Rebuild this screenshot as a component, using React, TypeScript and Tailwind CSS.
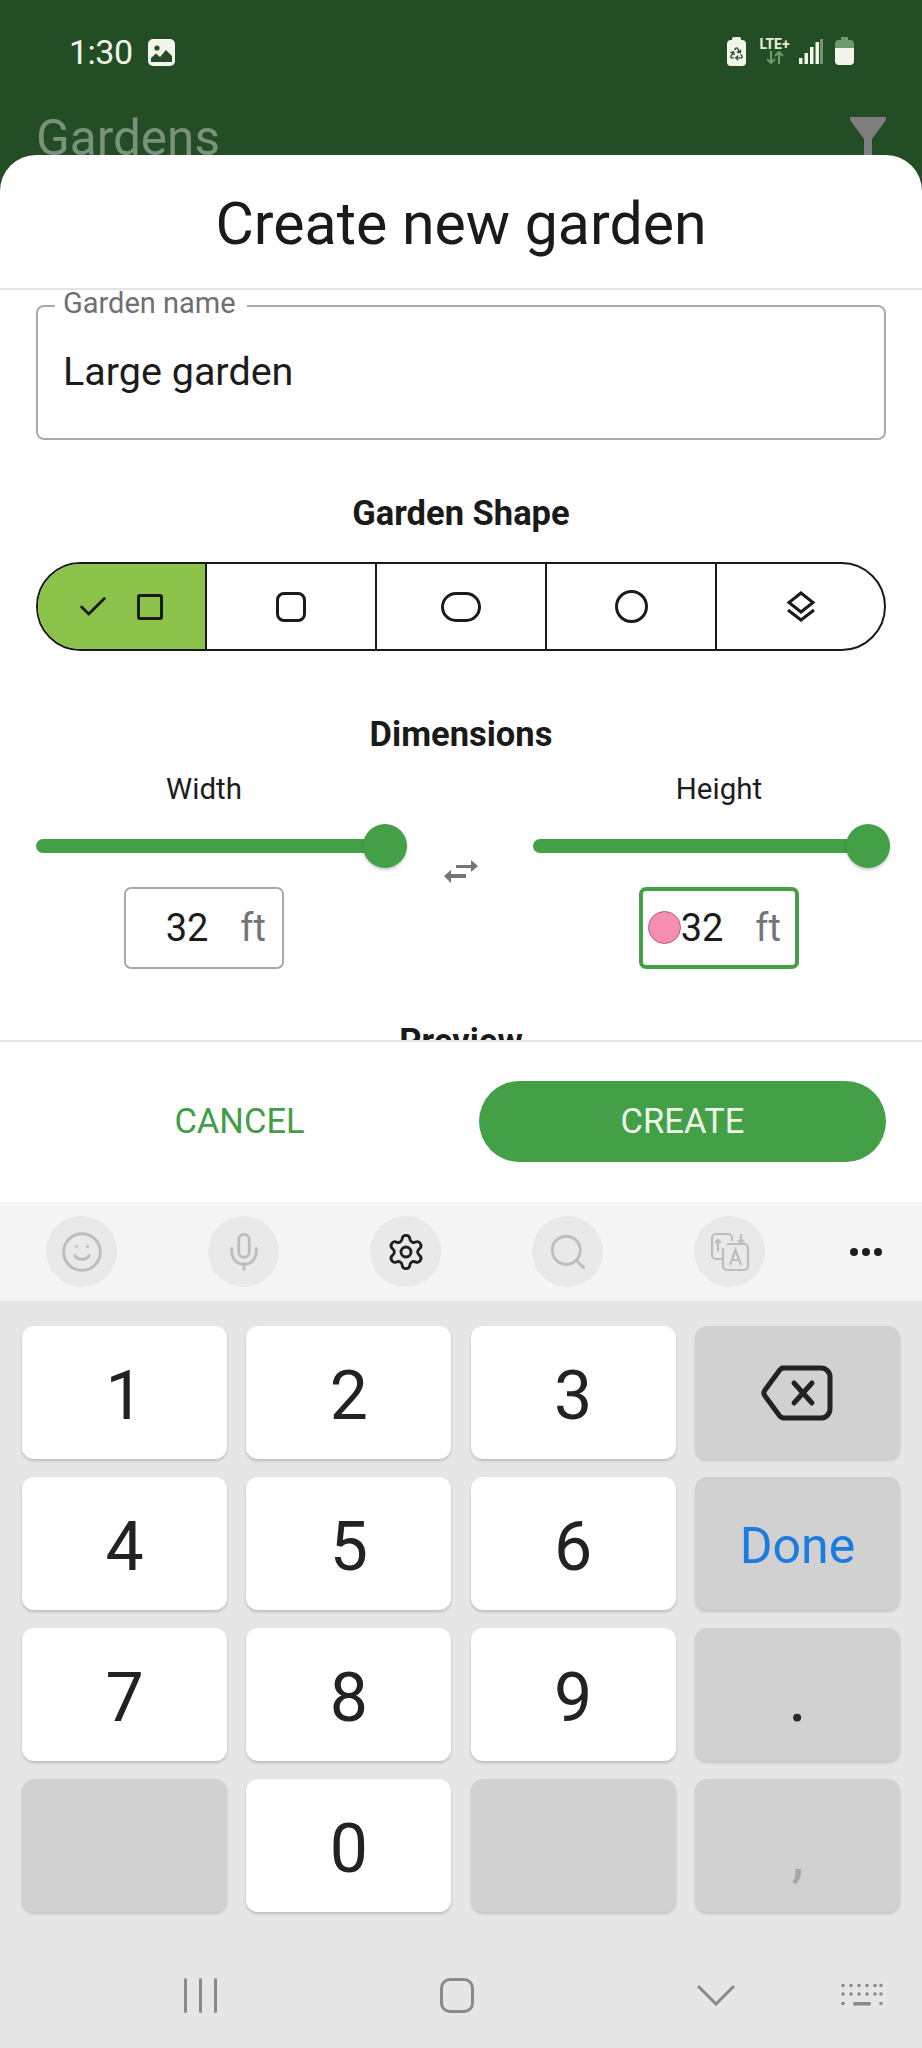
import { Check, Recycle, Settings, Smile, Mic, Search } from "lucide-react";

const FONT = "font-['Roboto','Liberation_Sans',sans-serif]";

function StatusBar() {
  return (
    <div className="flex items-start justify-between pt-[37px] pl-[69px] pr-[68px] h-[110px]">
      <div className="flex items-center gap-[15px]">
        <span className="text-[34px] leading-[30px] text-[#f3f5ea] tracking-[-0.5px]">1:30</span>
        <svg width="27" height="27" viewBox="0 0 27 27">
          <rect width="27" height="27" rx="5" fill="#f3f5ea" />
          <circle cx="9" cy="9" r="2.6" fill="#234e25" />
          <path d="M3 23V19L8 14.5L12 18L18 11L24 17V23Z" fill="#234e25" />
        </svg>
      </div>
      <div className="flex items-start">
        <div className="relative w-[19px] h-[26px] mt-[3px] rounded-[4px] bg-[#f3f5ea] flex items-center justify-center">
          <div className="absolute -top-[3px] left-[5px] w-[9px] h-[4px] rounded-t-[2px] bg-[#f3f5ea]" />
          <Recycle size={15} color="#234e25" strokeWidth={2.2} />
        </div>
        <div className="ml-[12px] w-[33px] flex flex-col items-center">
          <span className="text-[14px] leading-[14px] font-bold text-[#e8efdc]">LTE+</span>
          <svg width="18" height="13" viewBox="0 0 18 13" fill="none" stroke="#6f9a70" strokeWidth="2">
            <path d="M5 0V12M1 8L5 12L9 8" />
            <path d="M13 13V1M9 5L13 1L17 5" />
          </svg>
        </div>
        <svg className="ml-[8px] mt-[2px]" width="24" height="25" viewBox="0 0 24 25">
          <rect x="0" y="19" width="3.5" height="6" fill="#f3f5ea" />
          <rect x="5.5" y="14" width="3.5" height="11" fill="#f3f5ea" />
          <rect x="11" y="8" width="3.5" height="17" fill="#f3f5ea" />
          <rect x="16.5" y="3" width="3.5" height="22" fill="#f3f5ea" />
          <rect x="21" y="0" width="3" height="25" fill="#6f9a70" />
        </svg>
        <svg className="ml-[12px]" width="19" height="28" viewBox="0 0 19 28">
          <path d="M6 0H13V3H15A4 4 0 0 1 19 7V11H0V7A4 4 0 0 1 4 3H6Z" fill="#6f9a70" />
          <path d="M0 11H19V24A4 4 0 0 1 15 28H4A4 4 0 0 1 0 24Z" fill="#f3f5ea" />
        </svg>
      </div>
    </div>
  );
}

function AppBar() {
  return (
    <div className="flex justify-between pl-[36px] pr-[36px] h-[45px]">
      <span className="text-[49.5px] leading-[56px] text-[#7a917c]">Gardens</span>
      <svg className="mt-[7px] shrink-0" width="36" height="50" viewBox="0 0 36 50">
        <path d="M0 0H36V3L22 22V50H14V22L0 3Z" fill="#7e7e7e" />
      </svg>
    </div>
  );
}

const SHAPE_STROKE = "#1a1a1a";

function ShapeSelector() {
  return (
    <div className="flex h-[89px] rounded-full border-2 border-[#1a1a1a] overflow-hidden">
      <div className="w-[169px] shrink-0 bg-[#8bc34a] border-r-2 border-[#1a1a1a] flex items-center pl-[40px] gap-[27px]">
        <Check size={34} color={SHAPE_STROKE} strokeWidth={2} className="-ml-[2px]" />
        <div className="w-[26px] h-[26px] rounded-[3px] border-[3px] border-[#1a1a1a]" />
      </div>
      <div className="w-[170px] shrink-0 border-r-2 border-[#1a1a1a] flex items-center justify-center">
        <div className="w-[30px] h-[30px] rounded-[8px] border-[3px] border-[#1a1a1a]" />
      </div>
      <div className="w-[170px] shrink-0 border-r-2 border-[#1a1a1a] flex items-center justify-center">
        <div className="w-[40px] h-[30px] rounded-[15px] border-[3px] border-[#1a1a1a]" />
      </div>
      <div className="w-[170px] shrink-0 border-r-2 border-[#1a1a1a] flex items-center justify-center">
        <div className="w-[33px] h-[33px] rounded-full border-[3px] border-[#1a1a1a]" />
      </div>
      <div className="flex-1 flex items-center justify-center">
        <svg width="30" height="31" viewBox="0 0 30 31" fill="none" stroke={SHAPE_STROKE} strokeWidth="3">
          <path d="M15 2L27 11.5L15 21L3 11.5Z" />
          <path d="M2 19L15 29L28 19" />
        </svg>
      </div>
    </div>
  );
}

function Slider({ width }: { width: string }) {
  return (
    <div className={`flex items-center h-[44px] mt-[19px] ${width}`}>
      <div className="flex-1 h-[14px] rounded-full bg-[#43a047]" />
      <div className="w-[44px] h-[44px] -ml-[22px] rounded-full bg-[#43a047] shadow-[0_2px_3px_rgba(0,0,0,0.2)] shrink-0" />
    </div>
  );
}

function FtInput({ focused }: { focused?: boolean }) {
  return (
    <div
      className={`relative mt-[19px] w-[160px] h-[82px] rounded-[7px] bg-white flex items-center justify-end gap-[32px] text-[38px] ${
        focused ? "border-[4px] border-[#43a047] pr-[14px]" : "border-2 border-[#aaaaaa] pr-[16px]"
      }`}
    >
      {focused && (
        <div className="absolute left-[5px] top-[20px] w-[33px] h-[33px] rounded-full bg-[#f48fb1] border border-[#c2577f]" />
      )}
      <span className="text-[#1c1c1c] leading-none">32</span>
      <span className="text-[#757575] leading-none">ft</span>
    </div>
  );
}

function Dimensions() {
  return (
    <div className="flex mt-[19px]">
      <div className="w-[336px] shrink-0 flex flex-col items-center">
        <div className="h-[32px] leading-[32px] text-[29.5px] text-[#1c1c1c]">Width</div>
        <div className="self-start">
          <Slider width="w-[371px]" />
        </div>
        <FtInput />
      </div>
      <div className="w-[161px] shrink-0 flex justify-center pl-[17px] pt-[85px]">
        <svg width="34" height="26" viewBox="0 0 34 26" fill="#757575" className="h-[26px]">
          <path d="M12 7H27V2L34 8L27 14V10H12Z" />
          <path d="M22 16H7V12L0 18L7 25V20H22Z" />
        </svg>
      </div>
      <div className="w-[372px] shrink-0 flex flex-col items-center">
        <div className="h-[32px] leading-[32px] text-[29.5px] text-[#1c1c1c]">Height</div>
        <div className="self-start">
          <Slider width="w-[357px]" />
        </div>
        <FtInput focused />
      </div>
    </div>
  );
}

function Sheet() {
  return (
    <div className="h-[1047px] rounded-t-[36px] bg-white flex flex-col">
      <div className="h-[135px] shrink-0 border-b-2 border-[#e4e4e4] flex items-center justify-center">
        <h1 className="text-[59px] leading-none text-[#1a1a1a] mt-[4px]">Create new garden</h1>
      </div>
      <div className="h-[750px] shrink-0 overflow-hidden pt-[4px] pl-[36px] pr-[36px]">
        <div className="mt-[11px] h-[135px] rounded-[8px] border-2 border-[#aaaaaa] flex items-center pl-[25px] pb-[2px] relative">
          <span className="absolute -top-[17px] left-[17px] pl-[8px] pr-[11px] bg-white text-[29px] leading-[26px] text-[#6f6f6f]">
            Garden name
          </span>
          <span className="text-[39.5px] text-[#1c1c1c] leading-none">Large garden</span>
        </div>
        <div className="mt-[53px] h-[40px] leading-[40px] text-center text-[34.5px] font-bold text-[#1a1a1a]">Garden Shape</div>
        <div className="mt-[29px]">
          <ShapeSelector />
        </div>
        <div className="mt-[63px] h-[40px] leading-[40px] text-center text-[34.5px] font-bold text-[#1a1a1a]">Dimensions</div>
        <Dimensions />
        <div className="mt-[52px] h-[40px] leading-[40px] text-center text-[34.5px] font-bold text-[#1a1a1a]">Preview</div>
      </div>
      <div className="flex-1 border-t-2 border-[#e4e4e4] flex items-start pl-[36px] pr-[36px] pt-[39px]">
        <div className="w-[407px] h-[81px] flex items-center justify-center text-[34.5px] text-[#439c48]">CANCEL</div>
        <div className="ml-[36px] w-[407px] h-[81px] rounded-full bg-[#43a047] flex items-center justify-center text-[34.5px] text-[#eef6ea]">
          CREATE
        </div>
      </div>
    </div>
  );
}

function ToolCircle({ children }: { children: React.ReactNode }) {
  return <div className="w-[71px] h-[71px] rounded-full bg-[#e9e9e9] flex items-center justify-center">{children}</div>;
}

function Toolbar() {
  return (
    <div className="h-[99px] bg-[#f5f5f5] flex items-center pl-[46px] gap-[91px] relative">
      <ToolCircle>
        <Smile size={44} color="#bdbdbd" strokeWidth={1.6} />
      </ToolCircle>
      <ToolCircle>
        <Mic size={42} color="#bdbdbd" strokeWidth={1.6} />
      </ToolCircle>
      <ToolCircle>
        <Settings size={40} color="#1f1f1f" strokeWidth={1.7} />
      </ToolCircle>
      <ToolCircle>
        <Search size={42} color="#bdbdbd" strokeWidth={1.6} />
      </ToolCircle>
      <ToolCircle>
        <svg width="42" height="42" viewBox="0 0 42 42" fill="none" stroke="#bdbdbd" strokeWidth="2.2">
          <path d="M14 28H7A4 4 0 0 1 3 24V7A4 4 0 0 1 7 3H19A4 4 0 0 1 23 7V10" />
          <path d="M18 13H35A4 4 0 0 1 39 17V35A4 4 0 0 1 35 39H18A4 4 0 0 1 14 35V17" />
          <path d="M21 34L26.5 19L32 34M23 29H30" />
          <path d="M9 20V9M6 12L9 9L12 12" />
          <path d="M32 3V12M29 9L32 12L35 9" />
        </svg>
      </ToolCircle>
      <div className="flex gap-[4px] absolute left-[850px]">
        <div className="w-[8px] h-[8px] rounded-full bg-[#1f1f1f]" />
        <div className="w-[8px] h-[8px] rounded-full bg-[#1f1f1f]" />
        <div className="w-[8px] h-[8px] rounded-full bg-[#1f1f1f]" />
      </div>
    </div>
  );
}

function Key({ label }: { label: string }) {
  return (
    <div className="h-[133px] rounded-[12px] bg-white shadow-[0_2px_3px_rgba(0,0,0,0.18)] flex items-center justify-center text-[68px] leading-none text-[#222222] pt-[6px]">
      {label}
    </div>
  );
}

function GrayKey({ children, className }: { children?: React.ReactNode; className?: string }) {
  return (
    <div className={`h-[133px] rounded-[12px] bg-[#d1d1d1] shadow-[0_2px_3px_rgba(0,0,0,0.15)] flex items-center justify-center ${className ?? ""}`}>
      {children}
    </div>
  );
}

function Keypad() {
  return (
    <div className="grid grid-cols-4 gap-x-[19.3px] gap-y-[18px] pl-[22px] pr-[22px] pt-[25px]">
      <Key label="1" />
      <Key label="2" />
      <Key label="3" />
      <GrayKey>
        <svg width="72" height="56" viewBox="0 0 72 56" fill="none" stroke="#222222" strokeWidth="5" strokeLinejoin="round" strokeLinecap="round">
          <path d="M21 3H60A9 9 0 0 1 69 12V44A9 9 0 0 1 60 53H23A6 6 0 0 1 18 50L4 31A5 5 0 0 1 4 25L18 6A6 6 0 0 1 23 3Z" />
          <path d="M33 18L51 38M51 18L33 38" />
        </svg>
      </GrayKey>
      <Key label="4" />
      <Key label="5" />
      <Key label="6" />
      <GrayKey className="text-[50px] text-[#1a7be0] pt-[6px]">Done</GrayKey>
      <Key label="7" />
      <Key label="8" />
      <Key label="9" />
      <GrayKey className="text-[72px] text-[#2a2a2a] items-end pb-[28px] leading-none">.</GrayKey>
      <GrayKey />
      <Key label="0" />
      <GrayKey />
      <GrayKey className="text-[62px] text-[#a8a8a8] items-end pb-[26px] leading-none">,</GrayKey>
    </div>
  );
}

function NavBar() {
  return (
    <div className="flex items-center h-[36px] mt-[65px] pl-[184px]">
      <div className="flex gap-[12px] h-[35px]">
        <div className="w-[3px] bg-[#8a8a8a] rounded-full" />
        <div className="w-[3px] bg-[#8a8a8a] rounded-full" />
        <div className="w-[3px] bg-[#8a8a8a] rounded-full" />
      </div>
      <div className="ml-[223px] w-[34px] h-[35px] rounded-[10px] border-[3px] border-[#8a8a8a]" />
      <svg className="ml-[223px]" width="38" height="22" viewBox="0 0 38 22" fill="none" stroke="#8a8a8a" strokeWidth="3">
        <path d="M1 2L19 20L37 2" />
      </svg>
      <svg className="ml-[106px]" width="42" height="24" viewBox="0 0 42 24" fill="#8a8a8a">
        {[0, 8, 16, 24, 32, 38].map((x) => (
          <circle key={x} cx={x + 2} cy="2.5" r="1.8" />
        ))}
        {[0, 8, 16, 24, 32, 38].map((x) => (
          <circle key={x} cx={x + 2} cy="11" r="1.8" />
        ))}
        <rect x="12" y="19" width="18" height="3.5" rx="1.5" />
        <circle cx="2" cy="20.5" r="1.8" />
        <circle cx="40" cy="20.5" r="1.8" />
      </svg>
    </div>
  );
}

export default function App() {
  return (
    <div className={`w-[922px] h-[2048px] overflow-hidden bg-[#234e25] flex flex-col ${FONT}`}>
      <div className="h-[155px] shrink-0 overflow-hidden">
        <StatusBar />
        <AppBar />
      </div>
      <Sheet />
      <div className="flex-1 bg-[#e6e6e6]">
        <Toolbar />
        <Keypad />
        <NavBar />
      </div>
    </div>
  );
}
